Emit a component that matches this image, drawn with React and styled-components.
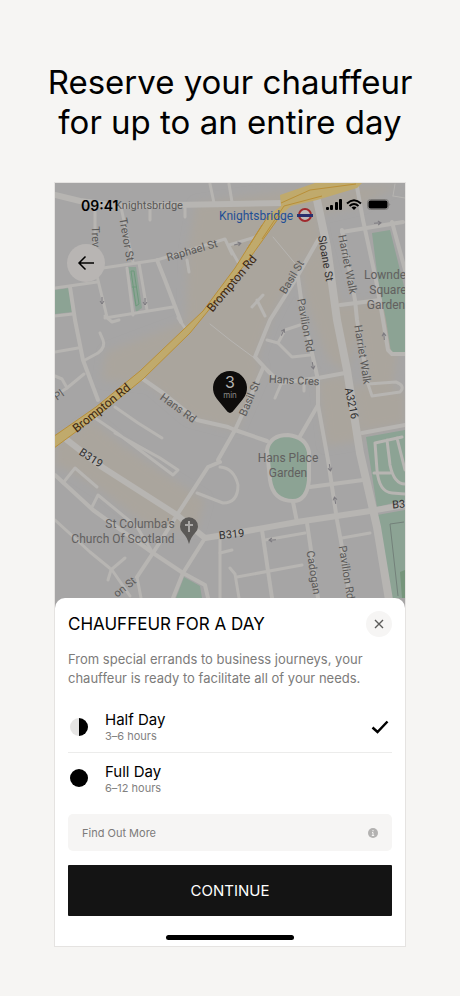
import React, { useState } from "react";
import styled, { createGlobalStyle } from "styled-components";

const options = [
  { id: "half", name: "Half Day", hours: "3–6 hours" },
  { id: "full", name: "Full Day", hours: "6–12 hours" },
];

const sandAreas = [
  "M196 204 L290 190 L400 184 L362 205 L318 215 L322 240 L300 262 L270 320 L256 358 L262 370 L236 430 L190 418 L150 384 L102 380 L106 352 L186 322 L188 250 Z",
  "M322 240 L340 305 L404 300 L392 395 L368 388 L360 330 L346 372 L328 360 L306 300 L300 268 Z",
  "M55 444 L92 420 L120 444 L170 478 L205 500 L196 530 L150 528 L104 492 L70 470 L55 466 Z",
  "M318 380 L346 374 L362 440 L326 446 Z",
  "M352 385 L405 392 L405 424 L362 432 Z",
];

const greenAreas = [
  "M55 290 L69 288 L72 312 L55 314 Z",
  "M128 267 L136 267 L142 308 L136 312 Z",
  "M372 233 L390 230 L405 290 L405 352 L391 352 L386 320 L378 280 Z",
  "M366 437 L405 430 L405 500 L377 507 Z",
  "M377 515 L405 510 L405 598 L392 598 Z",
  "M184 577 L200 586 L202 598 L176 598 Z",
];

const mainRoads = [
  "M55 195 L80 201 L117 206 L230 204 L284 203",
  "M67 440 L102 467 L177 515 L205 538 L230 534 L297 522 L370 511 L405 505",
];

const roads = [
  "M157 260 L165 280 L181 322",
  "M70 287 L75 320 L83 360 L98 400",
  "M140 377 L163 393 L197 420 L228 427 L235 430",
  "M318 240 L297 277 L270 320 L255 357 L267 370 L280 383 L318 378 L345 373",
  "M263 368 L249 400 L235 430 L267 441",
  "M298 277 L303 313 L312 353 L318 380 L318 405 L328 460 L337 520 L342 547 L350 598",
  "M318 405 L299 438",
  "M357 187 L363 220 L376 280 L383 320 L388 350 L392 354 L405 354",
  "M392 222 L405 270",
  "M342 232 L403 222",
  "M342 230 L355 300 L357 320 L368 383",
  "M340 305 L380 300",
  "M293 502 L297 522",
  "M310 487 L363 480",
  "M262 530 L272 598",
  "M307 523 L318 598",
  "M235 430 L218 460",
  "M55 475 L93 510 L153 553 L183 573 L205 585 L208 598",
  "M205 538 L183 573 L173 598",
  "M137 577 L153 553 L177 515 L208 467 L220 462",
  "M362 433 L405 425",
];

const lanes = [
  "M95 208 L95 250",
  "M121 207 L127 235 L133 262",
  "M103 268 L157 260 L225 239 L232 254",
  "M127 268 L133 315",
  "M139 263 L147 310",
  "M105 318 L173 307",
  "M55 288 L97 282",
  "M97 276 L107 317",
  "M55 316 L73 314",
  "M150 208 L150 220",
  "M185 207 L185 217",
  "M187 260 L189 272",
  "M210 184 L214 203",
  "M229 184 L232 202",
  "M55 352 L78 348",
  "M85 360 L98 353 Q106 347 103 340 L100 333",
  "M55 376 L62 379 L67 388 L84 374",
  "M55 396 L67 388",
  "M178 318 L185 328",
  "M105 316 L112 322 L119 320",
  "M115 407 L138 423 L162 438",
  "M95 418 L117 433 L173 475 L178 470 L160 458 L115 433",
  "M63 483 L75 468 L97 487",
  "M92 507 L98 495 L137 527 L153 553",
  "M55 520 L90 552 L112 570 L130 596",
  "M112 569 L125 558 M111 570 L108 580",
  "M137 577 L141 598",
  "M197 493 L223 503 Q238 503 238 485 Q234 468 220 467",
  "M220 540 L220 598",
  "M267 340 L278 343 L292 357 L310 355",
  "M278 343 L285 330 L300 325",
  "M281 384 L275 398 M304 380 L304 391",
  "M252 307 L263 295 M257 300 L265 316",
  "M229 245 L262 235 M229 246 L238 262",
  "M368 384 L396 382 Q406 386 400 392 L372 396 Z",
  "M265 540 L305 533",
  "M342 538 L370 533",
  "M237 577 L302 565 M230 568 L235 574 L239 598",
  "M375 443 L402 437 M375 443 L377 470 Q379 492 392 493 L405 494 M387 440 L390 465 Q394 484 405 484 M374 473 L390 473 M397 438 L405 470",
  "M220 553 L232 550",
];

const paths = [
  "M210 324 L230 340 L257 360",
  "M273 237 L298 267",
  "M395 184 L393 196",
  "M393 196 L405 198",
];

const arrows = [
  { x: 102, y: 301, turn: 90 },
  { x: 145, y: 302, turn: 90 },
  { x: 238, y: 244, turn: -15 },
  { x: 283, y: 332, turn: -65 },
  { x: 313, y: 366, turn: 80 },
  { x: 330, y: 468, turn: 80 },
  { x: 335, y: 500, turn: -100 },
  { x: 272, y: 540, turn: 175 },
  { x: 378, y: 223, turn: -5 },
  { x: 384, y: 336, turn: -95 },
];

const labels = [
  { text: "Knightsbridge", x: 149, y: 209, turn: 0 },
  { text: "Trev", x: 92, y: 237, turn: 88 },
  { text: "Trevor St", x: 123, y: 240, turn: 80 },
  { text: "Raphael St", x: 193, y: 254, turn: -16 },
  { text: "Basil St", x: 295, y: 279, turn: -59 },
  { text: "Basil St", x: 253, y: 400, turn: -67 },
  { text: "Harriet Walk", x: 344, y: 265, turn: 79 },
  { text: "Harriet Walk", x: 359, y: 355, turn: 81 },
  { text: "Pavilion Rd", x: 302, y: 326, turn: 80 },
  { text: "Hans Rd", x: 176, y: 411, turn: 36 },
  { text: "Hans Cres", x: 294, y: 384, turn: 3 },
  { text: "Pl", x: 61, y: 398, turn: -35 },
  { text: "Cadogan", x: 310, y: 573, turn: 81 },
  { text: "Pavilion Rd", x: 343, y: 573, turn: 81 },
  { text: "on St", x: 127, y: 590, turn: -38 },
];

const strongLabels = [
  { text: "Sloane St", x: 322, y: 259, turn: 80 },
  { text: "A3216", x: 348, y: 404, turn: 78 },
  { text: "B319", x: 89, y: 461, turn: 33 },
  { text: "B319", x: 232, y: 538, turn: -6 },
  { text: "B3", x: 399, y: 508, turn: -5 },
];

const avenueLabels = [
  { text: "Brompton Rd", x: 235, y: 286, turn: -50 },
  { text: "Brompton Rd", x: 104, y: 411, turn: -39 },
];

const places = [
  { text: "Lownde", x: 385, y: 279 },
  { text: "Square", x: 388, y: 294 },
  { text: "Garden", x: 386, y: 309 },
  { text: "Hans Place", x: 288, y: 462 },
  { text: "Garden", x: 288, y: 477 },
  { text: "St Columba's", x: 140, y: 528 },
  { text: "Church Of Scotland", x: 123, y: 543 },
];

const Label = ({ text, x, y, turn = 0 }) => (
  <text x={x} y={y} transform={`rotate(${turn} ${x} ${y})`}>
    {text}
  </text>
);

const CityMap = () => (
  <MapSvg
    viewBox="55 183 350 427"
    preserveAspectRatio="xMidYMin slice"
    role="img"
    aria-label="Map of Knightsbridge"
  >
    <rect x="0" y="100" width="500" height="600" fill="#a6a5a5" />
    <filter id="soft">
      <feGaussianBlur stdDeviation="4" />
    </filter>
    <g fill="#aaa59d" filter="url(#soft)">
      {sandAreas.map((d) => (
        <path key={d} d={d} />
      ))}
    </g>
    <g fill="#8ca394">
      {greenAreas.map((d) => (
        <path key={d} d={d} />
      ))}
    </g>
    <path d="M131 271 L134 271 L139 304 L136 306 Z M132 287 H137" fill="none" stroke="#6f9a7d" />
    <path d="M400 572 L405 570 V598 H402 Z" fill="#76957b" />
    <path d="M404 522 L390 524 L398 596" fill="none" stroke="#73817a" />

    <g fill="none" stroke="#b7b5b2" strokeLinecap="round" strokeLinejoin="round">
      <g strokeWidth="1">
        {paths.map((d) => (
          <path key={d} d={d} />
        ))}
      </g>
      <g strokeWidth="3">
        {lanes.map((d) => (
          <path key={d} d={d} />
        ))}
      </g>
      <g strokeWidth="4">
        {roads.map((d) => (
          <path key={d} d={d} />
        ))}
      </g>
      <g strokeWidth="6">
        {mainRoads.map((d) => (
          <path key={d} d={d} />
        ))}
      </g>
      <path
        d="M317 200 L327 247 L337 320 L347 370 L360 453 L377 527 L389 600"
        strokeWidth="8"
      />
      <path
        d="M267 450 Q270 435 288 435 Q306 437 309 452 V480 Q307 501 293 501 Q273 501 270 480 Z"
        fill="#8ca394"
        strokeWidth="4"
      />
    </g>

    <path
      d="M50 439 L96 407 L140 371 L203 311 L235 268 L268 216 L281 206 L280 195 L315 183 L362 183 L357 188 L317 200 L291 206 L280 216 L252 255 L221 295 L190 333 L143 379 L100 414 L50 451 Z"
      fill="#c0aa6c"
    />
    <path
      d="M50 439 L96 407 L140 371 L203 311 L235 268 L268 216 M280 216 L252 255 L221 295 L190 333 L143 379 L100 414 L50 451 M262 239 L284 206 L322 196 M281 203 L310 190 L356 184 M247 249 L262 225"
      fill="none"
      stroke="#b98f38"
    />

    <g stroke="#7d7b80" fill="none">
      {arrows.map((a) => (
        <path
          key={`${a.x}-${a.y}`}
          d="M-4 0 H3 M0 -2 L3 0 L0 2"
          transform={`translate(${a.x} ${a.y}) rotate(${a.turn})`}
        />
      ))}
    </g>

    <StreetText>
      {labels.map((l) => (
        <Label key={`${l.text}-${l.x}`} {...l} />
      ))}
    </StreetText>
    <StreetText $color="#2f2e2e">
      {strongLabels.map((l) => (
        <Label key={`${l.text}-${l.x}`} {...l} />
      ))}
    </StreetText>
    <StreetText $color="#3b2610" $size={12}>
      {avenueLabels.map((l) => (
        <Label key={`${l.text}-${l.x}`} {...l} />
      ))}
    </StreetText>
    <StreetText $color="#62605f" $size={12}>
      {places.map((l) => (
        <Label key={`${l.text}-${l.x}`} {...l} />
      ))}
    </StreetText>
    <StreetText $color="#1f4f96" $size={12}>
      <Label text="Knightsbridge" x={256} y={220} />
    </StreetText>

    <circle cx="305" cy="215" r="6" fill="#bdbbb9" stroke="#a0292d" strokeWidth="2" />
    <rect x="297" y="214" width="16" height="3" fill="#29306e" />

    <path
      d="M189 544 Q187 537 183 533 A9 9 0 1 1 195 533 Q191 537 189 544 Z"
      fill="#5b5957"
    />
    <path d="M189 521 V532 M185 525 H193" stroke="#aaa8a6" strokeWidth="2" />

    <path
      d="M230 413 Q228 413 226 410 L217 399 A17 17 0 1 1 243 399 L234 410 Q232 413 230 413 Z"
      fill="#0e0c0b"
    />
    <PinText x="230" y="388">
      3
    </PinText>
    <PinText x="230" y="398" $small>
      min
    </PinText>
  </MapSvg>
);

const App = () => {
  const [selected, setSelected] = useState("half");

  return (
    <Page>
      <GlobalStyle />
      <Title>
        Reserve your chauffeur
        <br />
        for up to an entire day
      </Title>
      <Phone>
        <MapArea>
          <CityMap />
          <Overlay>
            <StatusBar>
              <Time>09:41</Time>
              <svg width="66" height="14" viewBox="0 0 66 14" aria-hidden="true">
                <rect x="1" y="9" width="3" height="3" rx="1" />
                <rect x="5" y="7" width="3" height="5" rx="1" />
                <rect x="10" y="4" width="3" height="8" rx="1" />
                <rect x="14" y="1" width="3" height="11" rx="1" />
                <g fill="none" stroke="#000" strokeWidth="2">
                  <path d="M22 5.500 Q29 -1 36 5.500" />
                  <path d="M24.500 8 Q29 4 33.500 8" />
                </g>
                <path d="M29 12 L26.500 9.500 Q29 7.500 31.500 9.500 Z" />
                <rect x="42.500" y="1.500" width="21" height="10" rx="3" fill="none" stroke="#7b7977" />
                <rect x="43.500" y="2.500" width="19" height="8" rx="2" />
                <path d="M64.500 5 Q66 6.500 64.500 8 Z" fill="#6b6967" />
              </svg>
            </StatusBar>
            <BackButton aria-label="Back">
              <svg width="18" height="16" viewBox="0 0 18 16" fill="none" stroke="#000" strokeWidth="1.5">
                <path d="M17 8 H2 M8.500 1.500 L2 8 L8.500 14.500" />
              </svg>
            </BackButton>
          </Overlay>
        </MapArea>

        <Sheet>
          <SheetHeader>
            <SheetTitle>CHAUFFEUR FOR A DAY</SheetTitle>
            <CloseButton aria-label="Close">
              <svg width="10" height="10" viewBox="0 0 10 10" stroke="#5c5b5a" strokeWidth="1.4">
                <path d="M1 1 L9 9 M9 1 L1 9" />
              </svg>
            </CloseButton>
          </SheetHeader>
          <Description>
            From special errands to business journeys, your chauffeur is ready to
            facilitate all of your needs.
          </Description>

          <Options>
            {options.map((option) => (
              <Option key={option.id}>
                <Radio
                  name="duration"
                  value={option.id}
                  checked={selected === option.id}
                  onChange={() => setSelected(option.id)}
                />
                <Dial $half={option.id === "half"} />
                <OptionText>
                  <OptionName>{option.name}</OptionName>
                  <Hours>{option.hours}</Hours>
                </OptionText>
                {selected === option.id && (
                  <svg width="18" height="14" viewBox="0 0 18 14" fill="none" stroke="#000" strokeWidth="2.5">
                    <path d="M1.500 7.500 L6.500 12 L16.500 1.500" />
                  </svg>
                )}
              </Option>
            ))}
          </Options>

          <MoreButton>
            Find Out More
            <svg width="10" height="10" viewBox="0 0 10 10" aria-hidden="true">
              <circle cx="5" cy="5" r="5" fill="#b3b2b1" />
              <path d="M5 2 V3.300 M4 4.500 H5 V7.500 M3.800 7.500 H6.200" stroke="#f5f4f3" fill="none" />
            </svg>
          </MoreButton>
          <ContinueButton>CONTINUE</ContinueButton>
          <HomeIndicator />
        </Sheet>
      </Phone>
    </Page>
  );
};

const GlobalStyle = createGlobalStyle`
  * {
    box-sizing: border-box;
  }
  body {
    margin: 0;
    background: #f6f5f3;
    font-family: Inter, "Liberation Sans", sans-serif;
    color: #000;
  }
  button {
    border: none;
    padding: 0;
    font-family: inherit;
    cursor: pointer;
  }
`;
const Page = styled.main`
  padding: 62px 54px 49px;
`;
const Title = styled.h1`
  margin: 0 -40px 40px;
  font-size: 33px;
  line-height: 40px;
  font-weight: 400;
  text-align: center;
`;
const Phone = styled.section`
  border: 1px solid #e5e3e1;
  background: #fff;
`;
const MapArea = styled.div`
  position: relative;
`;
const MapSvg = styled.svg`
  display: block;
  width: 100%;
  overflow: hidden;
`;
const StreetText = styled.g`
  font-family: Roboto, sans-serif;
  font-size: ${({ $size }) => $size || 11}px;
  fill: ${({ $color }) => $color || "#595857"};
  text-anchor: middle;
`;
const PinText = styled.text`
  font-size: ${({ $small }) => ($small ? 8 : 16)}px;
  fill: ${({ $small }) => ($small ? "#8b8988" : "#b5b3b1")};
  text-anchor: middle;
`;
const Overlay = styled.div`
  position: absolute;
  inset: 0;
  padding: 12px 14px 0 12px;
`;
const StatusBar = styled.div`
  display: flex;
  align-items: center;
  justify-content: space-between;
  height: 20px;
  padding-left: 14px;
`;
const Time = styled.span`
  font-size: 14px;
  font-weight: 600;
`;
const BackButton = styled.button`
  display: flex;
  align-items: center;
  justify-content: center;
  width: 38px;
  height: 38px;
  margin-top: 29px;
  border-radius: 50%;
  background: #b8b5b3;
`;
const Sheet = styled.div`
  position: relative;
  margin-top: -12px;
  padding: 13px 13px 6px;
  border-radius: 10px 10px 0 0;
  background: #fff;
`;
const SheetHeader = styled.header`
  display: flex;
  align-items: center;
  justify-content: space-between;
`;
const SheetTitle = styled.h2`
  margin: 0;
  font-size: 17px;
  font-weight: 400;
`;
const CloseButton = styled.button`
  display: flex;
  align-items: center;
  justify-content: center;
  width: 26px;
  height: 26px;
  border-radius: 50%;
  background: #f6f5f4;
`;
const Description = styled.p`
  margin: 13px 0;
  font-size: 13px;
  line-height: 19px;
  color: #7c7b7a;
`;
const Options = styled.div`
  display: flex;
  flex-direction: column;
`;
const Option = styled.label`
  display: flex;
  align-items: center;
  height: 51px;
  padding: 0 3px 0 2px;
  cursor: pointer;
  & + & {
    border-top: 1px solid #ececeb;
  }
`;
const Radio = styled.input.attrs({ type: "radio" })`
  appearance: none;
  width: 0;
  height: 0;
  margin: 0;
`;
const Dial = styled.span`
  width: 18px;
  height: 18px;
  border-radius: 50%;
  background: ${({ $half }) =>
    $half ? "linear-gradient(90deg, #e6e5e4 50%, #000 50%)" : "#000"};
`;
const OptionText = styled.span`
  display: flex;
  flex: 1;
  flex-direction: column;
  margin-left: 17px;
`;
const OptionName = styled.span`
  font-size: 15px;
  line-height: 19px;
`;
const Hours = styled.span`
  font-size: 11px;
  line-height: 14px;
  color: #82817f;
`;
const MoreButton = styled.button`
  display: flex;
  align-items: center;
  justify-content: space-between;
  width: 100%;
  height: 37px;
  margin-top: 11px;
  padding: 0 14px;
  border-radius: 5px;
  background: #f6f5f4;
  font-size: 11px;
  color: #7c7b7a;
`;
const ContinueButton = styled.button`
  width: 100%;
  height: 51px;
  margin-top: 14px;
  border-radius: 1px;
  background: #141414;
  font-size: 15px;
  color: #fff;
`;
const HomeIndicator = styled.div`
  width: 128px;
  height: 5px;
  margin: 19px auto 0;
  border-radius: 3px;
  background: #000;
`;

export default App;
